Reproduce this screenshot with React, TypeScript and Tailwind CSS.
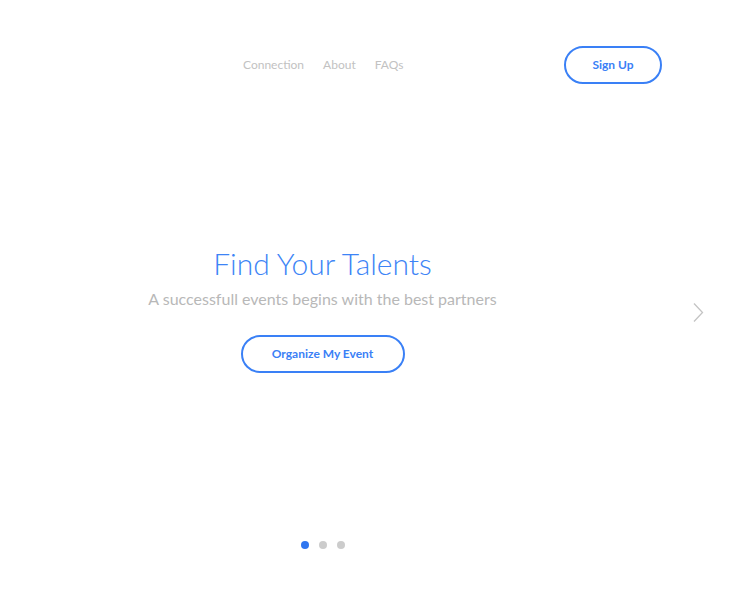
import React from 'react';

const links = ['Connection', 'About', 'FAQs'];

export default function App() {
  return (
    <div className="relative h-[590px] w-full overflow-hidden bg-white font-['Lato',sans-serif]">
      <header className="flex items-center pl-[243px] pr-[83px] pt-[46px]">
        <nav className="flex items-center gap-[19px] text-[12px] text-[#c2c2c2]">
          {links.map((l) => (
            <a key={l} href="#" className="leading-none">
              {l}
            </a>
          ))}
        </nav>
        <button className="ml-auto h-[38px] w-[98px] rounded-full border-2 border-[#3a80f6] text-[12px] font-bold text-[#3a80f6]">
          Sign Up
        </button>
      </header>

      <section className="flex w-[645px] flex-col items-center pt-[164px]">
        <h1 className="text-[30px] font-light leading-none text-[#3d84f6]">Find Your Talents</h1>
        <p className="mt-[13px] text-[16px] leading-none text-[#b8b8b8]">
          A successfull events begins with the best partners
        </p>
        <button className="mt-[28px] h-[38px] w-[164px] rounded-full border-2 border-[#3a80f6] text-[12px] font-bold text-[#3a80f6]">
          Organize My Event
        </button>
        <div className="mt-[168px] flex items-center gap-[10px]">
          <span className="h-2 w-2 rounded-full bg-[#2f76f0]" />
          <span className="h-2 w-2 rounded-full bg-[#cccccc]" />
          <span className="h-2 w-2 rounded-full bg-[#cccccc]" />
        </div>
      </section>

      <button className="absolute left-[692px] top-[302px] text-[#c4c4c4]" aria-label="Next">
        <svg width="12" height="21" viewBox="0 0 12 21" fill="none">
          <path d="M2 1.5 L10.5 10.5 L2 19.5" stroke="currentColor" strokeWidth="1.3" />
        </svg>
      </button>
    </div>
  );
}
